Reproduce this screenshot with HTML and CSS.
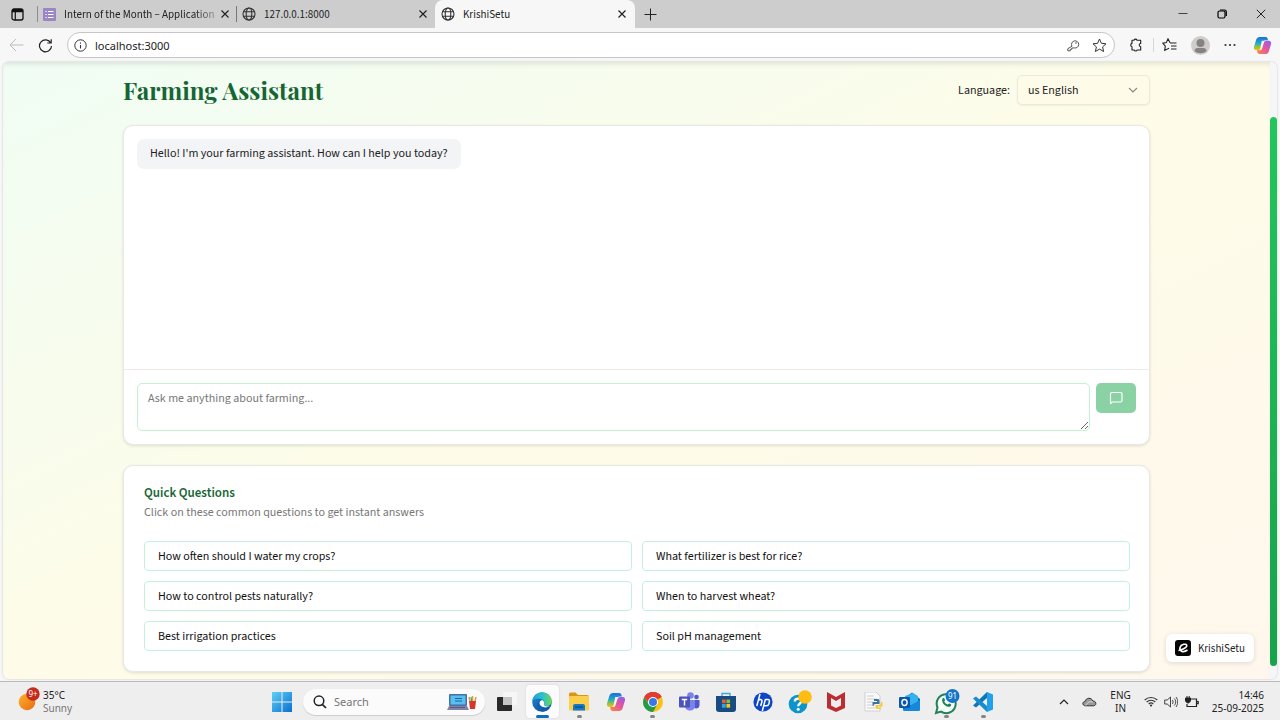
FILE: index.html
```html
<!DOCTYPE html>
<html lang="en">
<head>
<meta charset="utf-8">
<meta name="viewport" content="width=device-width, initial-scale=1">
<title>KrishiSetu</title>
<link rel="stylesheet" href="styles.css">
</head>
<body>
<svg width="0" height="0" class="defs" aria-hidden="true">
  <defs>
    <linearGradient id="g-blue" x1="0" y1="0" x2="1" y2="1"><stop offset="0" stop-color="#5fd0f7"/><stop offset="1" stop-color="#0a6fd0"/></linearGradient>
    <linearGradient id="g-sun" x1="0" y1="0" x2="1" y2="1"><stop offset="0" stop-color="#fbb327"/><stop offset="1" stop-color="#ea6a12"/></linearGradient>
    <linearGradient id="g-co1" x1="0" y1="0" x2="0" y2="1"><stop offset="0" stop-color="#1b6fe0"/><stop offset=".45" stop-color="#22a8c8"/><stop offset=".75" stop-color="#8cc63f"/><stop offset="1" stop-color="#f4c20d"/></linearGradient>
    <linearGradient id="g-co2" x1="1" y1="0" x2="0" y2="1"><stop offset="0" stop-color="#8d5cf0"/><stop offset=".5" stop-color="#e8559c"/><stop offset="1" stop-color="#fb8a3c"/></linearGradient>
    <linearGradient id="g-edge1" x1="0" y1="0" x2="1" y2="0"><stop offset="0" stop-color="#1f9fe0"/><stop offset=".55" stop-color="#2cc3c8"/><stop offset="1" stop-color="#6fd84a"/></linearGradient>
    <linearGradient id="g-edge2" x1="0" y1="0" x2="1" y2="1"><stop offset="0" stop-color="#1a86d8"/><stop offset="1" stop-color="#0b4a93"/></linearGradient>
    <symbol id="globe" viewBox="0 0 14 14"><g fill="none" stroke="#333" stroke-width="1.1"><circle cx="7" cy="7" r="6"/><ellipse cx="7" cy="7" rx="2.8" ry="6"/><path d="M1.6 4.8h10.8M1.6 9.2h10.8"/></g></symbol>
    <symbol id="cross" viewBox="0 0 10 10"><path d="M1.5 1.5l7 7M8.500 1.500l-7 7" stroke="#222" stroke-width="1.2" fill="none"/></symbol>
    <symbol id="copilot" viewBox="0 0 20 20"><path d="M7 1h6.200c1.200 0 1.900.700 2.200 1.800l.500 1.700h-2.400c-1.200 0-1.900.700-2.200 1.800L9.500 12.500c-.4 1.500-1 2.500-2.600 2.500H3.500C1.400 15 .5 13.400 1.100 11.300l2.300-7.500C4 2 5.300 1 7 1z" fill="url(#g-co1)"/><path d="M13 19H6.800c-1.200 0-1.900-.7-2.200-1.800L4.200 15h2.500c1.400 0 2-.8 2.400-2l1.700-5.600C11.300 5.800 12 5 13.400 5h3.100c2.100 0 3 1.600 2.400 3.700l-2.300 7.500C16 18 14.700 19 13 19z" fill="url(#g-co2)"/><path d="M9.200 5h4.300c-1.200.300-1.700 1-2.100 2.300l-1.900 6C9 14.700 8.300 15 7 15H6c1-.400 1.400-1.200 1.700-2.200z" fill="#fff" fill-opacity=".9"/></symbol>
  </defs>
</svg>

<div class="desktop">
  <header class="browser">
    <div class="tabstrip">
      <button class="tab-actions" aria-label="Tab actions"><svg width="13" height="13" viewBox="0 0 13 13"><rect x="1" y="1" width="11" height="11" rx="2" fill="none" stroke="#111" stroke-width="1.300"/><path d="M1 4.200V3a2 2 0 0 1 2-2h7a2 2 0 0 1 2 2v1.200z" fill="#111"/><path d="M4.300 4v8" stroke="#111" stroke-width="1.200"/></svg></button>
      <div class="tab tab-form">
        <svg width="13" height="13" viewBox="0 0 13 13"><rect width="13" height="13" rx="1" fill="#9a86c4"/><path d="M5 3.500h5.500M5 6.500h5.500M5 9.500h5.500M2.500 3.500h1.200M2.500 6.500h1.200M2.500 9.500h1.200" stroke="#fff" stroke-width="1.200"/></svg>
        <span class="tab-name fade">Intern of the Month – Application</span>
        <button class="close" aria-label="Close tab"><svg width="10" height="10"><use href="#cross"/></svg></button>
      </div>
      <div class="tab tab-local">
        <svg width="14" height="14"><use href="#globe"/></svg>
        <span class="tab-name">127.0.0.1:8000</span>
        <button class="close" aria-label="Close tab"><svg width="10" height="10"><use href="#cross"/></svg></button>
      </div>
      <div class="tab tab-active">
        <svg width="14" height="14"><use href="#globe"/></svg>
        <span class="tab-name">KrishiSetu</span>
        <button class="close" aria-label="Close tab"><svg width="10" height="10"><use href="#cross"/></svg></button>
      </div>
      <button class="new-tab" aria-label="New tab"><svg width="13" height="13" viewBox="0 0 13 13"><path d="M6.500.500v12M.500 6.500h12" stroke="#222"/></svg></button>
      <div class="window-controls">
        <button aria-label="Minimize"><svg width="10" height="10" viewBox="0 0 10 10"><path d="M.500 4.500h9" stroke="#444"/></svg></button>
        <button aria-label="Restore"><svg width="10" height="10" viewBox="0 0 10 10"><g fill="none" stroke="#000" stroke-width="1.200"><rect x="1" y="2" width="7" height="7" rx="1.500"/><path d="M3 1h4.500A1.800 1.800 0 0 1 9.300 2.800V7"/></g></svg></button>
        <button aria-label="Close"><svg width="10" height="10" viewBox="0 0 10 10"><path d="M.800.800l8.400 8.400M9.200.800L.800 9.200" stroke="#222"/></svg></button>
      </div>
    </div>
    <div class="toolbar">
      <button aria-label="Back"><svg width="15" height="14" viewBox="0 0 15 14"><path d="M7 1L1 7l6 6M1 7h13.500" fill="none" stroke="#bbb"/></svg></button>
      <button aria-label="Refresh"><svg width="15" height="15" viewBox="0 0 15 15"><path d="M12.800 5A6 6 0 1 0 13.500 8M13.200 1.200V5H9.300" fill="none" stroke="#222" stroke-width="1.200"/></svg></button>
      <div class="address">
        <svg width="13" height="13" viewBox="0 0 13 13"><circle cx="6.500" cy="6.500" r="5.700" fill="none" stroke="#333"/><path d="M6.500 6v3.500M6.500 3.500v1.200" stroke="#333" stroke-width="1.100"/></svg>
        <input type="text" value="localhost:3000" aria-label="Address">
        <button aria-label="Passwords"><svg width="13" height="13" viewBox="0 0 13 13"><path d="M5 7.200A3.600 3.600 0 1 1 7.200 8.900L6 9H4.800v1.300H3.300v1.500H.800V9.700L5 7.200" fill="none" stroke="#555"/><circle cx="9" cy="4" r=".800" fill="#555"/></svg></button>
        <button aria-label="Add to favorites"><svg width="15" height="15" viewBox="0 0 15 15"><path d="M7.500 1l1.900 4.300 4.600.500-3.400 3.100 1 4.600-4.100-2.400-4.100 2.400 1-4.600L1 5.800l4.600-.5z" fill="none" stroke="#333" stroke-linejoin="round"/></svg></button>
      </div>
      <button aria-label="Extensions"><svg width="14" height="14" viewBox="0 0 14 14"><path d="M3 2.200h2a1.600 1.600 0 0 1 3 0h3.700v3.300a1.500 1.500 0 0 0 0 3V12H8.200a1.600 1.600 0 0 1-3 0H3V8.700a1.700 1.700 0 0 1 0-3.300z" fill="none" stroke="#222" stroke-width="1.100" stroke-linejoin="round"/></svg></button>
      <span class="divider"></span>
      <button aria-label="Favorites"><svg width="15" height="14" viewBox="0 0 15 14"><path d="M8 4.800L6 .800 4.300 4.600.800 5.200l2.500 2.900-.6 4.300L7 10.300M8 5h6.500M9 8h5.500M9 11h5.500" fill="none" stroke="#222" stroke-width="1.100"/></svg></button>
      <button aria-label="Profile"><svg width="19" height="19" viewBox="0 0 19 19"><circle cx="9.500" cy="9.500" r="9.500" fill="#cfcdcb"/><circle cx="9.500" cy="7" r="4" fill="#858280"/><path d="M3.500 15c.2-2 1.300-3 3-3h6c1.700 0 2.800 1 3 3-3 3-9 3-12 0z" fill="#858280"/></svg></button>
      <button aria-label="Settings and more"><svg width="12" height="4" viewBox="0 0 12 4"><g fill="#333"><circle cx="1.500" cy="2" r="1.100"/><circle cx="6" cy="2" r="1.100"/><circle cx="10.500" cy="2" r="1.100"/></g></svg></button>
      <button class="assistant" aria-label="Copilot"><svg width="19" height="19"><use href="#copilot"/></svg></button>
    </div>
  </header>

  <div class="viewport">
    <main class="page">
      <div class="container">
        <div class="page-head">
          <h1>Farming Assistant</h1>
          <div class="language">
            <label for="lang">Language:</label>
            <div class="select-wrap">
              <select id="lang"><option>us English</option></select>
              <svg width="10" height="6" viewBox="0 0 10 6"><path d="M1 1l4 4 4-4" fill="none" stroke="#888" stroke-width="1.100"/></svg>
            </div>
          </div>
        </div>

        <section class="card chat" aria-label="Chat">
          <div class="messages"><p class="bubble">Hello! I'm your farming assistant. How can I help you today?</p></div>
          <form class="composer">
            <textarea placeholder="Ask me anything about farming..." aria-label="Your question"></textarea>
            <button type="button" class="send" aria-label="Send"><svg width="14" height="14" viewBox="0 0 14 14"><path d="M1.500 12.500V3a1.500 1.500 0 0 1 1.500-1.500h8.500A1.500 1.500 0 0 1 13 3v6.500a1.500 1.500 0 0 1-1.500 1.500H3.300z" fill="none" stroke="#fff" stroke-width="1.200" stroke-linejoin="round"/></svg></button>
          </form>
        </section>

        <section class="card quick">
          <h2>Quick Questions</h2>
          <p class="hint">Click on these common questions to get instant answers</p>
          <div class="questions">
            <button>How often should I water my crops?</button>
            <button>What fertilizer is best for rice?</button>
            <button>How to control pests naturally?</button>
            <button>When to harvest wheat?</button>
            <button>Best irrigation practices</button>
            <button>Soil pH management</button>
          </div>
        </section>
      </div>
    </main>
    <div class="scrollbar"><div class="thumb"></div></div>
    <a class="brand" href="#"><svg width="16" height="16" viewBox="0 0 16 16"><rect width="16" height="16" rx="3" fill="#050505"/><path d="M3.500 10.500C6 10 12 8 11.800 5.500 11.500 3.200 6 4 5 7.500c-1 4 3.500 5.500 7.500 2.500" fill="none" stroke="#fff" stroke-width="1.600"/></svg>KrishiSetu</a>
  </div>

  <footer class="taskbar">
    <div class="weather">
      <svg width="24" height="26" viewBox="0 0 24 26"><circle cx="9" cy="15" r="8.300" fill="url(#g-sun)"/><circle cx="15" cy="7" r="6.700" fill="#c42b1c"/><text x="15" y="10" text-anchor="middle" class="badge-text">9+</text></svg>
      <div><div>35°C</div><div class="muted">Sunny</div></div>
    </div>
    <div class="dock">
      <button class="start" aria-label="Start"><svg width="20" height="20" viewBox="0 0 20 20"><path d="M0 0h9.500v9.500H0zM10.500 0H20v9.500h-9.500zM0 10.500h9.500V20H0zM10.500 10.500H20V20h-9.500z" fill="url(#g-blue)"/></svg></button>
      <div class="search">
        <svg width="14" height="14" viewBox="0 0 14 14"><circle cx="6" cy="5.800" r="4.800" fill="none" stroke="#222" stroke-width="1.500"/><path d="M9.300 9.300L13 13" stroke="#222" stroke-width="1.700"/></svg>
        <input type="text" placeholder="Search" aria-label="Search">
        <svg width="30" height="18" viewBox="0 0 30 18"><rect x="2" y="1" width="18" height="12" rx="1" fill="#456fa6"/><rect x="3.500" y="2.500" width="15" height="9" fill="#58bff0"/><path d="M8 5.500h7M8 8h7" stroke="#1968a8"/><path d="M2 13h18l2 4H0z" fill="#8184a8"/><path d="M3 14.500h15" stroke="#555b7e"/><path d="M22 8h7l-1 8h-5z" fill="#d6372c"/><path d="M23 8l-1-4M25.500 8V3M28 8l1-4" stroke="#d3a144" stroke-width="1.500"/><path d="M24.500 8l-.5-4" stroke="#3c8c55"/></svg>
      </div>
      <div class="apps">
        <button aria-label="Task view"><svg width="22" height="20" viewBox="0 0 22 20"><rect x="2" y="5" width="15" height="14" rx="1" fill="#292929"/><rect x="8" y="0" width="14" height="13" rx="1" fill="#f6f6f6"/><path d="M8 5h9v8H8z" fill="#c4c4c4"/></svg></button>
        <button class="current" aria-label="Edge"><svg width="20" height="20" viewBox="0 0 20 20"><circle cx="10" cy="10" r="9.800" fill="url(#g-edge2)"/><path d="M.3 9A9.800 9.800 0 0 1 19.800 9c.3 3.300-2 5-4.600 5-2 0-3.500-.8-3.300-2 .7-1 .7-4-2.800-4.900C5.500 6 1.200 7.200.3 9z" fill="url(#g-edge1)"/><path d="M9 8.500c-2 1-2.800 3-1.600 5 1.600 2.800 6 4 10.300 2.600-1.500 2.300-4 3.500-6.700 3.700C6 19 4.200 15 5.500 11.600 6.100 10 7.400 8.800 9 8.500z" fill="#145da8"/><path d="M9.500 8.300c-2.500.8-2.500 4.200-.2 6 2.400 1.700 6.300 1.400 9-.2-2 .8-6.800.4-6.400-2.100.7-1.200.1-4-2.400-3.700z" fill="#f6fbff"/></svg></button>
        <button class="running" aria-label="File Explorer"><svg width="22" height="19" viewBox="0 0 22 19"><path d="M1 2a1.500 1.500 0 0 1 1.500-1.500h5L10 3h9a2 2 0 0 1 2 2v3H1z" fill="#d89716"/><rect x="1" y="4" width="20" height="14.500" rx="1" fill="#fbcf4b"/><path d="M5 18.500V14a2 2 0 0 1 2-2h8a2 2 0 0 1 2 2v4.500z" fill="#1478c7"/><path d="M7 15h8" stroke="#075091" stroke-width="1.500"/></svg></button>
        <button aria-label="Copilot"><svg width="20" height="20"><use href="#copilot"/></svg></button>
        <button class="running" aria-label="Chrome"><svg width="20" height="20" viewBox="0 0 20 20"><circle cx="10" cy="10" r="10" fill="#fbc116"/><path d="M10 10L1.340 5A10 10 0 0 1 18.660 5z" fill="#e33b2e"/><path d="M10 5h8.660A10 10 0 0 0 1.340 5L6 12z" fill="#e33b2e"/><path d="M1.340 5A10 10 0 0 0 10 20l4.300-7.500L10 14.500 5.700 12.500z" fill="#229a4c"/><circle cx="10" cy="10" r="5" fill="#fff"/><circle cx="10" cy="10" r="4" fill="#3679e8"/></svg></button>
        <button aria-label="Teams"><svg width="21" height="19" viewBox="0 0 21 19"><circle cx="17.500" cy="5" r="2.300" fill="#5059c9"/><circle cx="11.500" cy="3.500" r="3.300" fill="#7b83eb"/><path d="M14 8h6.500v5c0 5-6.500 4-6.500 1z" fill="#5059c9"/><path d="M6 8h10v6c0 6-10 6-10 0z" fill="#7b83eb"/><rect y="4.500" width="11" height="11" rx="1" fill="#4b53bc"/><path d="M2.800 7.500h5.400M5.500 7.500v6" stroke="#fff" stroke-width="1.400"/></svg></button>
        <button aria-label="Microsoft Store"><svg width="20" height="20" viewBox="0 0 20 20"><path d="M6 5V1.500h8V5" fill="none" stroke="#3da5dc" stroke-width="1.300"/><path d="M0 4h20v13a3 3 0 0 1-3 3H3a3 3 0 0 1-3-3z" fill="#174b82"/><path d="M6 7.500h3.700v3.700H6z" fill="#ee5a35"/><path d="M10.400 7.500h3.700v3.700h-3.700z" fill="#82bc3a"/><path d="M6 12h3.700v3.700H6z" fill="#2ba8e0"/><path d="M10.400 12h3.700v3.700h-3.700z" fill="#fabd2c"/></svg></button>
        <button aria-label="HP"><svg width="20" height="20" viewBox="0 0 20 20"><circle cx="10" cy="10" r="9.600" fill="#0d47c8"/><path d="M7 2L3.800 14M5.300 8.500c2.200-1.700 4.200-.8 3.600 1.200L7.700 14M12.500 7L9.300 19M12.300 7.500h2.500c1.700 0 1.800 1.200 1.500 2.500l-.5 2c-.4 1.300-1 1.800-2.300 1.800H11" fill="none" stroke="#fff" stroke-width="1.500"/></svg></button>
        <button aria-label="Help"><svg width="24" height="24" viewBox="0 0 24 24"><circle cx="10" cy="14" r="9.300" fill="#0d95cb"/><path d="M6.800 11.500c0-4 6.800-3.800 6.600-.2-.1 2.300-3.200 2.200-3.200 5" fill="none" stroke="#fff" stroke-width="2.300"/><circle cx="10.200" cy="19.300" r="1.500" fill="#fff"/><circle cx="17" cy="7" r="6.800" fill="#ffbd12"/></svg></button>
        <button aria-label="McAfee"><svg width="18" height="20" viewBox="0 0 18 20"><path d="M0 0l9 5 9-5v16l-9 4-9-4zM4 6v7.500L9 16l5-2.500V6L9 9z" fill="#bd2c30" fill-rule="evenodd"/></svg></button>
        <button aria-label="Python file"><svg width="19" height="20" viewBox="0 0 19 20"><path d="M1 0h11l4 4v15H1z" fill="#fafafa" stroke="#d0d0d0"/><path d="M3 4h7M3 7h10M3 10h6M3 13h5M3 16h8" stroke="#ccc"/><path d="M10 7h4a1.500 1.500 0 0 1 1.500 1.500V12h-4a2 2 0 0 0-2 2H8.500v-4H13V9h-3z" fill="#3774a8"/><path d="M17 10h1.500v4.500H14v1h3V17h-4a1.500 1.500 0 0 1-1.500-1.500V13H15a2 2 0 0 0 2-2z" fill="#f6ca36"/></svg></button>
        <button aria-label="Outlook"><svg width="21" height="19" viewBox="0 0 21 19"><path d="M4 7l9-6.500L21 7v10a2 2 0 0 1-2 2H6a2 2 0 0 1-2-2z" fill="#0868b8"/><path d="M6 4l8-3 5 3v7l-6 3-7-4z" fill="#36b1ef"/><path d="M4 17.500L21 8v9a2 2 0 0 1-2 2H5z" fill="#1687da"/><rect y="5" width="11" height="11" rx="1" fill="#0959a8"/><ellipse cx="5.500" cy="10.500" rx="2.600" ry="3" fill="none" stroke="#fff" stroke-width="1.400"/></svg></button>
        <button class="running" aria-label="WhatsApp"><svg width="26" height="26" viewBox="0 0 26 26"><path d="M2 24l1.500-5.500A9.500 9.500 0 1 1 7 22.600z" fill="#f5fff8" stroke="#20815a" stroke-width="2"/><path d="M8.500 9.500c1-1 2-.5 2.500 1.500.2.700-.7 1-.7 1.500.7 1.500 2 2.600 3.400 3.100.5 0 1-1.200 1.500-1 2.300.8 2.500 1.300 1.600 2.400C14 20 6.500 14.500 8.500 9.500z" fill="#20815a"/><circle cx="18.500" cy="7" r="7" fill="#1475c9"/><text x="18.500" y="10" text-anchor="middle" class="badge-text">91</text></svg></button>
        <button class="running" aria-label="Visual Studio Code"><svg width="20" height="20" viewBox="0 0 20 20"><path d="M14 0l6 2.500v15L14 20z" fill="#23a0ec"/><path d="M0 13.500L14 0v6L3 15.500z" fill="#0f74b8"/><path d="M0 6.500L14 20v-6L3 4.500z" fill="#168bd0"/></svg></button>
      </div>
    </div>
    <div class="tray">
      <svg width="10" height="6" viewBox="0 0 10 6"><path d="M1 5l4-4 4 4" fill="none" stroke="#222" stroke-width="1.200"/></svg>
      <svg width="15" height="10" viewBox="0 0 15 10"><path d="M3.500 8.800C.2 8.800-.1 4.800 3 4.500 4 .3 9.700.2 10.700 4c4-.3 4.200 4.800.8 4.800z" fill="#999" stroke="#333"/><path d="M4 8.500c1-3 4-4.500 7-3.500" fill="none" stroke="#ddd"/></svg>
      <div class="ime">ENG<br>IN</div>
      <div class="status">
        <svg width="14" height="11" viewBox="0 0 14 11"><path d="M.7 4a9 9 0 0 1 12.600 0M2.700 6a6.200 6.200 0 0 1 8.600 0M4.700 8a3.300 3.300 0 0 1 4.600 0" fill="none" stroke="#333" stroke-width="1.100"/><circle cx="7" cy="9.500" r="1.100" fill="#333"/></svg>
        <svg width="14" height="12" viewBox="0 0 14 12"><path d="M.7 4h2.500L6.500 1v10L3.200 8H.7zM8.300 4c1 1 1 3 0 4M10.200 2.500c2 2 2 5 0 7M12 1c2.300 3 2.300 7 0 10" fill="none" stroke="#444"/></svg>
        <svg width="15" height="12" viewBox="0 0 15 12"><path d="M6 3h6.500v7.500H3V8M13 5.500h1.200v2.200H13" fill="none" stroke="#222" stroke-width="1.200"/><path d="M3 0v2M5.200 0v2M1.500 2h5v3L4.700 7H3.300L1.500 5z" fill="#222" stroke="#222"/></svg>
      </div>
      <div class="clock">14:46<br>25-09-2025</div>
    </div>
  </footer>
</div>
</body>
</html>
```

FILE: styles.css
```css
* { box-sizing: border-box; }
body { margin: 0; font-family: "Noto Sans", "Open Sans", sans-serif; font-size: 10px; color: #222; }
button, input, select, textarea { font: inherit; color: inherit; }
button { border: 0; padding: 0; background: none; display: flex; align-items: center; justify-content: center; }
input { border: 0; outline: 0; background: none; padding: 0; min-width: 0; }
svg { display: block; flex: none; }
h1, h2, p { margin: 0; }
.defs { position: absolute; }
.desktop { min-height: 100vh; display: flex; flex-direction: column; background: #f7f7f7; }

.tabstrip { display: flex; align-items: stretch; height: 28px; background: #cdcdcd; font-family: "Source Sans 3", "Source Sans Pro", "Noto Sans CJK SC", sans-serif; font-size: 11px; }
.tab-actions { width: 34px; }
.tab { display: flex; align-items: center; gap: 8px; padding: 0 6px; }
.tab-name { flex: 1; white-space: nowrap; }
.tab-form { width: 199px; margin-left: 3px; border-left: 1px solid #8d8d8d; padding-left: 5px; }
.tab-form .close { margin-left: -5px; }
.tab-local { width: 199px; border-left: 1px solid #777; padding-left: 5px; padding-right: 7px; }
.tab-active { width: 200px; background: #f7f7f7; border-radius: 8px 8px 0 0; padding-right: 8px; }
.tab-form, .tab-local { height: 16px; align-self: center; }
.fade { -webkit-mask-image: linear-gradient(90deg, #000 85%, #0004); mask-image: linear-gradient(90deg, #000 85%, #0004); }
.new-tab { width: 30px; }
.window-controls { margin-left: auto; display: flex; gap: 29px; padding-right: 14px; }

.toolbar { display: flex; align-items: center; height: 34px; gap: 14px; padding: 0 8px 0 9px; }
.address { flex: 1; display: flex; align-items: center; height: 26px; gap: 8px; padding: 0 7px 0 6px; border: 1px solid #c6c6c8; border-radius: 13px; background: #fff; font-size: 11px; }
.address input { flex: 1; }
.address button + button { margin-left: 4px; }
.divider { width: 1px; height: 14px; background: #d5d5d5; margin: 0 -6px 0 -4px; }
.assistant { margin-left: 3px; }

.viewport { position: relative; flex: 1; display: flex; margin: 0 3px 2px 3px; border-radius: 6px; overflow: hidden; box-shadow: 0 0 2px #bbb; font-family: "Source Sans 3", "Source Sans Pro", "Noto Sans CJK SC", sans-serif; font-size: 12px; }
.page { flex: 1; padding: 13px 24px 7px; background: linear-gradient(to bottom right, #f0fdf4, #fefce8, #fff7ed); box-shadow: inset 0 5px 6px -4px #0002; }
.container { max-width: 1027px; margin: 0 auto; display: flex; flex-direction: column; gap: 20px; }
.page-head { display: flex; align-items: center; justify-content: space-between; }
h1 { font: bold 24px/30px "Playfair Display", "Liberation Serif", serif; color: #166534; }
.language { display: flex; align-items: center; gap: 7px; }
.select-wrap { position: relative; width: 133px; }
.select-wrap svg { position: absolute; right: 12px; top: 12px; pointer-events: none; }
select { appearance: none; width: 100%; height: 30px; padding: 0 10px; border: 1px solid #eae9dc; border-radius: 5px; background: #fefce8; box-shadow: 0 1px 2px #0000000d; }
.card { background: #fff; border: 1px solid #e8e8e5; border-radius: 10px; box-shadow: 0 1px 3px #0000001f; }
.messages { min-height: 243px; padding: 13px; }
.bubble { width: fit-content; padding: 6px 13px; line-height: 18px; background: #f3f4f6; border-radius: 7px; }
.composer { display: flex; align-items: flex-start; gap: 6px; padding: 13px; border-top: 1px solid #ececec; }
textarea { flex: 1; height: 48px; padding: 6px 10px; line-height: 18px; border: 1px solid #c4f1d6; border-radius: 5px; outline: 0; resize: vertical; background: #fff; }
textarea::placeholder { color: #777; }
.send { width: 40px; height: 30px; border-radius: 5px; background: #8ad1a4; }
.quick { padding: 17px 19px 20px 20px; }
h2 { font-size: 13px; line-height: 20px; font-weight: 600; color: #166534; }
.hint { line-height: 20px; color: #777; }
.questions { display: grid; grid-template-columns: 1fr 1fr; gap: 10px; margin-top: 18px; }
.questions button { height: 30px; justify-content: flex-start; padding: 0 13px; border: 1px solid #c4f1dc; border-radius: 4px; background: #fff; color: #111; }
.scrollbar { display: flex; width: 7px; padding: 55px 0 13px; background: #f4f6f8; }
.thumb { flex: 1; border-radius: 4px; background: linear-gradient(#22c55e, #16a34a); }
.brand { position: absolute; right: 23px; bottom: 17px; display: flex; align-items: center; gap: 7px; height: 28px; padding: 0 9px; background: #fff; border-radius: 6px; box-shadow: 0 1px 5px #0002; color: #222; text-decoration: none; font-size: 11px; }

.taskbar { display: grid; grid-template-columns: 1fr auto 1fr; align-items: center; height: 40px; padding: 0 16px 0 0; border-top: 1px solid #b9b9b9; background: #eee; line-height: 13px; }
.weather { display: flex; align-items: center; gap: 1px; padding-left: 18px; }
.weather svg { margin-top: -4px; }
.muted { color: #777; }
.badge-text { font-size: 8px; fill: #fff; }
.dock { display: flex; align-items: center; height: 100%; }
.start { width: 36px; margin-right: 3px; }
.search { display: flex; align-items: center; width: 182px; height: 26px; margin-right: 4px; padding: 0 8px 0 10px; gap: 7px; background: #fbfbfb; border-radius: 13px; box-shadow: 0 1px 1px #ccc; font-size: 11px; }
.search input { flex: 1; }
.apps { display: flex; justify-content: space-between; width: 511px; }
.apps button { position: relative; width: 33px; height: 33px; }
.apps .current { background: #fbfbfb; border-radius: 4px; box-shadow: 0 0 2px #ccc; }
.running::after, .current::after { content: ""; position: absolute; bottom: 0; width: 5px; height: 3px; border-radius: 2px; background: #858585; }
.current::after { width: 13px; background: #0f6cbd; }
.tray { display: flex; align-items: center; justify-content: flex-end; gap: 13px; white-space: nowrap; }
.ime { text-align: center; }
.status { display: flex; align-items: center; gap: 6px; }
.clock { text-align: right; }
```
